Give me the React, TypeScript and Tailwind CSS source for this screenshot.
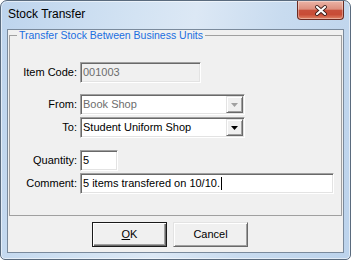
const sunken =
  'border border-t-[#a0a0a0] border-l-[#a0a0a0] border-b-white border-r-white shadow-[inset_1px_1px_0_#696969,inset_-1px_-1px_0_#e3e3e3]';
const raised =
  'border border-t-[#e3e3e3] border-l-[#e3e3e3] border-b-[#696969] border-r-[#696969] shadow-[inset_1px_1px_0_#fff,inset_-1px_-1px_0_#a0a0a0]';

const Label = ({ text }: { text: string }) => (
  <span className="w-[70px] pr-[3px] text-right text-[11px] text-black">{text}</span>
);

const Combo = ({ value, disabled }: { value: string; disabled?: boolean }) => (
  <div className={`flex h-[21px] w-[165px] items-center bg-white ${sunken}`}>
    <span className={`flex-1 pl-[2px] text-[11px] ${disabled ? 'text-[#6d6d6d]' : 'text-black'}`}>
      {value}
    </span>
    <div className={`mr-px flex h-[17px] w-[17px] items-center justify-center bg-[#f0f0f0] ${raised}`}>
      <svg width="7" height="4" viewBox="0 0 7 4">
        <path d="M0 0h7L3.5 4z" fill={disabled ? '#a0a0a0' : '#000'} />
      </svg>
    </div>
  </div>
);

const CloseButton = () => (
  <div className="mr-[6px] flex h-[19px] w-[47px] items-center justify-center rounded-b-[4px] border border-t-0 border-[#6b2b22] bg-[linear-gradient(180deg,#ebb3a6_0%,#dd8f7e_45%,#c8503b_52%,#c84c36_75%,#e08466_100%)] shadow-[inset_0_0_0_1px_rgba(255,255,255,0.35)]">
    <svg width="14" height="11" viewBox="0 0 14 11">
      <path d="M3 2 L11 9 M11 2 L3 9" stroke="#3a1c18" strokeWidth="3.8" strokeLinecap="round" />
      <path d="M3 2 L11 9 M11 2 L3 9" stroke="#fff" strokeWidth="2.2" strokeLinecap="round" />
    </svg>
  </div>
);

export default function App() {
  return (
    <div className="h-[260px] w-[351px] bg-white font-['Liberation_Sans',Arial,sans-serif]">
      <div className="flex h-full flex-col rounded-t-[7px] rounded-b-[5px] border border-[#5a6b7e] bg-[linear-gradient(100deg,#bdd4ed_0%,#d3e3f3_35%,#dce8f5_50%,#c8dbef_72%,#bcd3ec_100%)] shadow-[inset_0_0_0_1px_rgba(255,255,255,0.55)]">
        <div className="flex h-[28px] items-start justify-between">
          <span className="pl-[7px] text-[12px] leading-[27px] text-black">Stock Transfer</span>
          <CloseButton />
        </div>

        <div className="mx-[6px] mb-[6px] flex flex-1 flex-col border border-[#7a8a9c] bg-[#f0f0f0]">
          <fieldset className="mx-px h-[186px] border border-[#a0a0a0]">
            <legend className="ml-[7px] px-[2px] text-[10.5px] leading-[10px] text-[#1a6ee0]">
              Transfer Stock Between Business Units
            </legend>

            <div className="mt-[22px] flex flex-col">
              <div className="flex items-center">
                <Label text="Item Code:" />
                <div className={`flex h-[21px] w-[121px] items-center bg-[#f0f0f0] pl-[2px] text-[11px] text-[#6d6d6d] ${sunken}`}>
                  001003
                </div>
              </div>

              <div className="mt-[11px] flex items-center">
                <Label text="From:" />
                <Combo value="Book Shop" disabled />
              </div>

              <div className="mt-[2px] flex items-center">
                <Label text="To:" />
                <Combo value="Student Uniform Shop" />
              </div>

              <div className="mt-[12px] flex items-center">
                <Label text="Quantity:" />
                <div className={`flex h-[21px] w-[38px] items-center bg-white pl-[2px] text-[11px] text-black ${sunken}`}>
                  5
                </div>
              </div>

              <div className="mt-[2px] flex items-center">
                <Label text="Comment:" />
                <div className={`flex h-[21px] w-[254px] items-center bg-white pl-[2px] text-[11px] text-black ${sunken}`}>
                  5 items transfered on 10/10.
                  <span className="ml-px h-[13px] w-px bg-black" />
                </div>
              </div>
            </div>
          </fieldset>

          <div className="flex gap-[6px] pl-[84px] pt-[6px]">
            <button className="h-[25px] w-[75px] border border-[#1a1a1a] bg-[#f0f0f0] text-[11px] text-black shadow-[inset_1px_1px_0_#fff,inset_-1px_-1px_0_#696969,inset_-2px_-2px_0_#a0a0a0]">
              <span className="underline">O</span>K
            </button>
            <button className={`h-[25px] w-[75px] bg-[#f0f0f0] text-[11px] text-black ${raised}`}>
              Cancel
            </button>
          </div>
        </div>
      </div>
    </div>
  );
}
